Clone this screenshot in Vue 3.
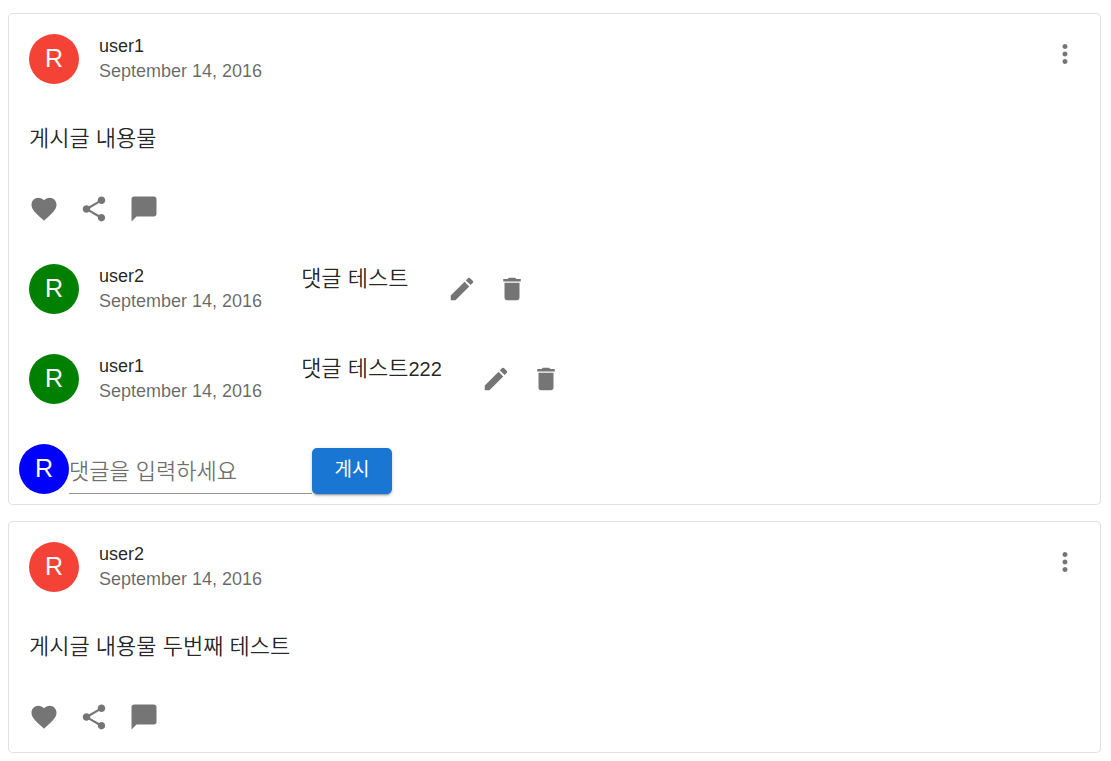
<script setup>
import { ref } from 'vue'

const icons = {
  heart: 'm12 21.35-1.45-1.32C5.4 15.36 2 12.28 2 8.5 2 5.42 4.42 3 7.5 3c1.74 0 3.41.81 4.5 2.09C13.09 3.81 14.76 3 16.5 3 19.58 3 22 5.42 22 8.5c0 3.78-3.4 6.86-8.55 11.54z',
  share: 'M18 16.08c-.76 0-1.44.3-1.96.77L8.91 12.7c.05-.23.09-.46.09-.7s-.04-.47-.09-.7l7.05-4.11c.54.5 1.25.81 2.04.81 1.66 0 3-1.34 3-3s-1.34-3-3-3-3 1.34-3 3c0 .24.04.47.09.7L8.04 9.81C7.5 9.31 6.79 9 6 9c-1.66 0-3 1.34-3 3s1.34 3 3 3c.79 0 1.5-.31 2.04-.81l7.12 4.16c-.05.21-.08.43-.08.65 0 1.61 1.31 2.92 2.92 2.92s2.92-1.31 2.92-2.92-1.31-2.92-2.92-2.92',
  chat: 'M20 2H4c-1.1 0-1.99.9-1.99 2L2 22l4-4h14c1.1 0 2-.9 2-2V4c0-1.1-.9-2-2-2',
  edit: 'M3 17.25V21h3.75L17.81 9.94l-3.75-3.75zM20.71 7.04c.39-.39.39-1.02 0-1.41l-2.34-2.34a.9959.9959 0 0 0-1.41 0l-1.83 1.83 3.75 3.75z',
  trash: 'M6 19c0 1.1.9 2 2 2h8c1.1 0 2-.9 2-2V7H6zM19 4h-3.5l-1-1h-5l-1 1H5v2h14z',
  more: 'M12 8c1.1 0 2-.9 2-2s-.9-2-2-2-2 .9-2 2 .9 2 2 2m0 2c-1.1 0-2 .9-2 2s.9 2 2 2 2-.9 2-2-.9-2-2-2m0 6c-1.1 0-2 .9-2 2s.9 2 2 2 2-.9 2-2-.9-2-2-2',
}

const postActions = [
  { icon: 'heart', label: '좋아요' },
  { icon: 'share', label: '공유' },
  { icon: 'chat', label: '댓글' },
]
const commentActions = [
  { icon: 'edit', label: '수정' },
  { icon: 'trash', label: '삭제' },
]

const date = 'September 14, 2016'
const posts = [
  {
    id: 1,
    user: 'user1',
    text: '게시글 내용물',
    open: true,
    comments: [
      { id: 1, user: 'user2', text: '댓글 테스트', number: '' },
      { id: 2, user: 'user1', text: '댓글 테스트', number: '222' },
    ],
  },
  { id: 2, user: 'user2', text: '게시글 내용물 두번째 테스트', open: false, comments: [] },
]
const draft = ref('')
</script>

<template>
  <main class="feed">
    <article v-for="post in posts" :key="post.id" class="card">
      <header class="head">
        <div class="avatar red">R</div>
        <div class="who">
          <span class="name">{{ post.user }}</span>
          <span class="date">{{ date }}</span>
        </div>
        <button class="icon-button menu" type="button" aria-label="메뉴">
          <svg viewBox="0 0 24 24"><path :d="icons.more" /></svg>
        </button>
      </header>

      <p class="text">{{ post.text }}</p>

      <div class="actions">
        <button v-for="a in postActions" :key="a.icon" class="icon-button" type="button" :aria-label="a.label">
          <svg viewBox="0 0 24 24"><path :d="icons[a.icon]" /></svg>
        </button>
      </div>

      <div v-for="c in post.comments" :key="c.id" class="comment">
        <div class="head">
          <div class="avatar green">R</div>
          <div class="who">
            <span class="name">{{ c.user }}</span>
            <span class="date">{{ date }}</span>
          </div>
        </div>
        <p class="text">{{ c.text }}<span v-if="c.number" class="number">{{ c.number }}</span></p>
        <div class="actions">
          <button v-for="a in commentActions" :key="a.icon" class="icon-button" type="button" :aria-label="a.label">
            <svg viewBox="0 0 24 24"><path :d="icons[a.icon]" /></svg>
          </button>
        </div>
      </div>

      <form v-if="post.open" class="write" @submit.prevent>
        <div class="avatar blue">R</div>
        <input v-model="draft" class="field" type="text" placeholder="댓글을 입력하세요" aria-label="댓글을 입력하세요" />
        <button class="submit" type="submit">게시</button>
      </form>
    </article>
  </main>
</template>

<style>
body {
  background: #fff;
}
</style>

<style scoped>
.feed {
  display: flex;
  flex-direction: column;
  gap: 16px;
  padding: 13px 10px 8px 8px;
  font-family: "Liberation Sans", "Noto Sans CJK KR", sans-serif;
  color: rgba(0, 0, 0, 0.87);
}
.card {
  border: 1px solid rgba(0, 0, 0, 0.12);
  border-radius: 5px;
  background: #fff;
}
.head {
  display: flex;
  align-items: center;
  padding: 20px;
}
.avatar {
  display: flex;
  align-items: center;
  justify-content: center;
  box-sizing: border-box;
  flex: none;
  width: 50px;
  height: 50px;
  padding-bottom: 2px;
  border-radius: 50%;
  color: #fff;
  font-size: 25px;
  line-height: 25px;
}
.red {
  background: #f44336;
}
.green {
  background: #008000;
}
.blue {
  background: #0000ff;
}
.who {
  display: flex;
  flex-direction: column;
  margin-left: 20px;
  font-size: 18px;
  line-height: 25px;
  white-space: nowrap;
}
.date {
  color: rgba(0, 0, 0, 0.6);
}
.icon-button {
  display: flex;
  padding: 10px;
  border: 0;
  border-radius: 50%;
  background: none;
  color: rgba(0, 0, 0, 0.54);
  cursor: pointer;
}
.icon-button svg {
  width: 30px;
  height: 30px;
  fill: currentColor;
}
.menu {
  align-self: flex-start;
  margin: -5px -10px -5px auto;
}
.text {
  margin: 0;
  padding: 20px;
  font-size: 22px;
  font-weight: 350;
  line-height: 30px;
}
.comment .text {
  padding-right: 19px;
  padding-left: 19px;
}
.number {
  font-size: 20px;
}
.actions {
  display: flex;
  align-items: center;
  padding: 10px;
}
.comment {
  display: flex;
}
.write {
  display: flex;
  align-items: flex-end;
  padding: 20px 10px 10px;
}
.field {
  box-sizing: border-box;
  width: 243px;
  height: 46px;
  padding: 2px 0 0;
  border: 0;
  border-bottom: 1px solid rgba(0, 0, 0, 0.42);
  border-radius: 0;
  outline: 0;
  background: none;
  color: inherit;
  font-family: inherit;
  font-size: 22px;
  font-weight: 350;
}
.field::placeholder {
  color: rgba(0, 0, 0, 0.56);
  opacity: 1;
}
.submit {
  width: 80px;
  height: 46px;
  padding: 0 0 8px;
  border: 0;
  border-radius: 5px;
  background: #1976d2;
  box-shadow: 0 3px 1px -2px rgba(0, 0, 0, 0.2), 0 2px 2px 0 rgba(0, 0, 0, 0.14), 0 1px 5px 0 rgba(0, 0, 0, 0.12);
  color: #fff;
  font-family: inherit;
  font-size: 19px;
  cursor: pointer;
}
</style>
